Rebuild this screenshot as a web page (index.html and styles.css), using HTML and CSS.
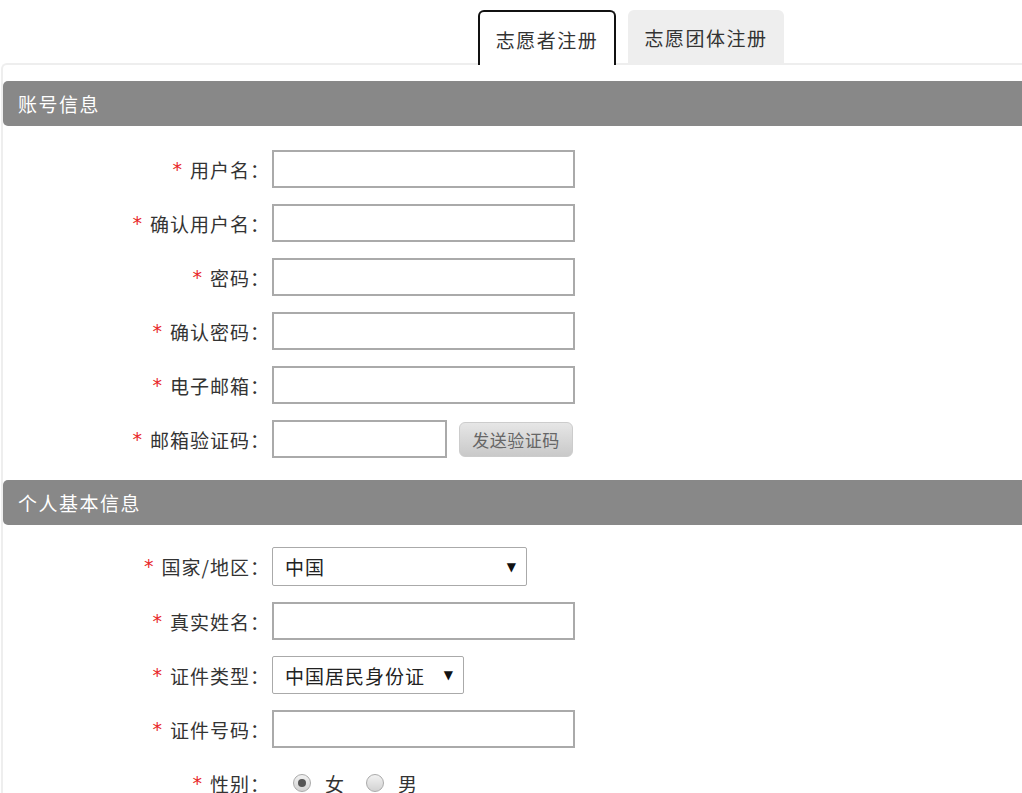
FILE: index.html
```html
<!DOCTYPE html>
<html lang="zh-CN">
<head>
<meta charset="utf-8">
<title>注册</title>
<link rel="stylesheet" href="styles.css">
</head>
<body>
<div class="tabs">
  <div class="tab active">志愿者注册</div>
  <div class="tab">志愿团体注册</div>
</div>
<div class="panel">
  <div class="section-title">账号信息</div>
  <div class="section">
    <div class="row"><label class="lbl"><span class="req">*</span>用户名：</label><input class="txt" type="text"></div>
    <div class="row"><label class="lbl"><span class="req">*</span>确认用户名：</label><input class="txt" type="text"></div>
    <div class="row"><label class="lbl"><span class="req">*</span>密码：</label><input class="txt" type="password"></div>
    <div class="row"><label class="lbl"><span class="req">*</span>确认密码：</label><input class="txt" type="password"></div>
    <div class="row"><label class="lbl"><span class="req">*</span>电子邮箱：</label><input class="txt" type="text"></div>
    <div class="row"><label class="lbl"><span class="req">*</span>邮箱验证码：</label><input class="txt short" type="text"><button class="btn" type="button">发送验证码</button></div>
  </div>
  <div class="section-title">个人基本信息</div>
  <div class="section second">
    <div class="row"><label class="lbl"><span class="req">*</span>国家/地区：</label><div class="select country"><span>中国</span><span class="arrow">▼</span></div></div>
    <div class="row"><label class="lbl"><span class="req">*</span>真实姓名：</label><input class="txt" type="text"></div>
    <div class="row"><label class="lbl"><span class="req">*</span>证件类型：</label><div class="select idtype"><span>中国居民身份证</span><span class="arrow">▼</span></div></div>
    <div class="row"><label class="lbl"><span class="req">*</span>证件号码：</label><input class="txt" type="text"></div>
    <div class="row"><label class="lbl"><span class="req">*</span>性别：</label>
      <div class="radios">
        <label class="opt"><input type="radio" name="sex" checked><span>女</span></label>
        <label class="opt"><input type="radio" name="sex"><span>男</span></label>
      </div>
    </div>
  </div>
</div>
</body>
</html>
```
FILE: styles.css
```css
html, body {
  margin: 0;
  padding: 0;
  background: #fff;
  overflow: hidden;
}
body {
  font-family: "Noto Sans CJK SC", "Liberation Sans", sans-serif;
  color: #333;
  font-size: 19px;
}
.tabs {
  display: flex;
  gap: 12px;
  padding: 10px 0 0 478px;
}
.tab {
  height: 53px;
  box-sizing: border-box;
  display: flex;
  align-items: center;
  justify-content: center;
  font-size: 19px;
  letter-spacing: 1.5px;
  color: #333;
  background: #eee;
  border-radius: 6px 6px 0 0;
  width: 156px;
  padding-top: 2px;
}
.tab.active {
  width: 138px;
  background: #fff;
  border: 2px solid #111;
  border-bottom: none;
  position: relative;
  z-index: 1;
  margin-bottom: -2px;
  height: 55px;
}
.panel {
  border-top: 2px solid #eee;
  border-left: 2px solid #eee;
  border-radius: 6px 0 0 0;
  margin-left: 1px;
  margin-right: -30px;
  padding-top: 16px;
}
.section-title {
  height: 45px;
  background: #888;
  color: #fff;
  font-size: 19px;
  letter-spacing: 1.5px;
  display: flex;
  align-items: center;
  padding-left: 15px;
  border-radius: 5px 0 0 5px;
}
.section {
  display: flex;
  flex-direction: column;
  gap: 16px;
  padding: 24px 0 22px;
}
.section.second {
  padding-top: 22px;
}
.row {
  display: flex;
  align-items: center;
  min-height: 38px;
}
.lbl {
  width: 270px;
  box-sizing: border-box;
  text-align: right;
  letter-spacing: 1px;
  color: #333;
  font-size: 19px;
  white-space: nowrap;
  margin-left: -3px;
}
.req {
  color: #e8282a;
  margin-right: 8px;
  letter-spacing: 0;
  font-family: "DejaVu Sans", sans-serif;
  font-size: 19px;
  position: relative;
  top: -2px;
}
.txt {
  width: 303px;
  height: 38px;
  box-sizing: border-box;
  border: 2px solid #aaa;
  margin: 0 0 0 2px;
  padding: 0 8px;
  font-size: 16px;
  background: #fff;
  outline: none;
}
.txt.short {
  width: 175px;
}
.btn {
  margin-left: 12px;
  width: 114px;
  height: 35px;
  border: 1px solid #ccc;
  border-radius: 6px;
  background: linear-gradient(#e6e6e6, #c9c9c9);
  color: #666;
  font-family: "Noto Sans CJK SC", sans-serif;
  font-size: 17px;
  letter-spacing: 0.5px;
  padding: 0;
}
.select {
  margin-left: 2px;
  height: 39px;
  box-sizing: border-box;
  border: 1px solid #aaa;
  border-radius: 2px;
  display: flex;
  align-items: center;
  justify-content: space-between;
  padding: 0 9px 0 12px;
  color: #222;
  font-size: 19px;
  letter-spacing: 1px;
  background: #fff;
}
.select.country { width: 255px; }
.select.idtype { width: 192px; height: 38px; }
.arrow {
  font-size: 12px;
  color: #111;
  font-family: "DejaVu Sans", sans-serif;
}
.radios {
  display: flex;
  gap: 22px;
  margin-left: 23px;
}
.opt {
  display: flex;
  align-items: center;
  gap: 14px;
  font-size: 19px;
  color: #333;
}
.opt input {
  appearance: none;
  -webkit-appearance: none;
  margin: 0;
  width: 18px;
  height: 18px;
  border-radius: 50%;
  border: 1px solid #aaa;
  background: linear-gradient(#f2f2f2, #d2d2d2);
  box-sizing: border-box;
  display: grid;
  place-items: center;
}
.opt input:checked::before {
  content: "";
  width: 8px;
  height: 8px;
  border-radius: 50%;
  background: #555;
}
```
